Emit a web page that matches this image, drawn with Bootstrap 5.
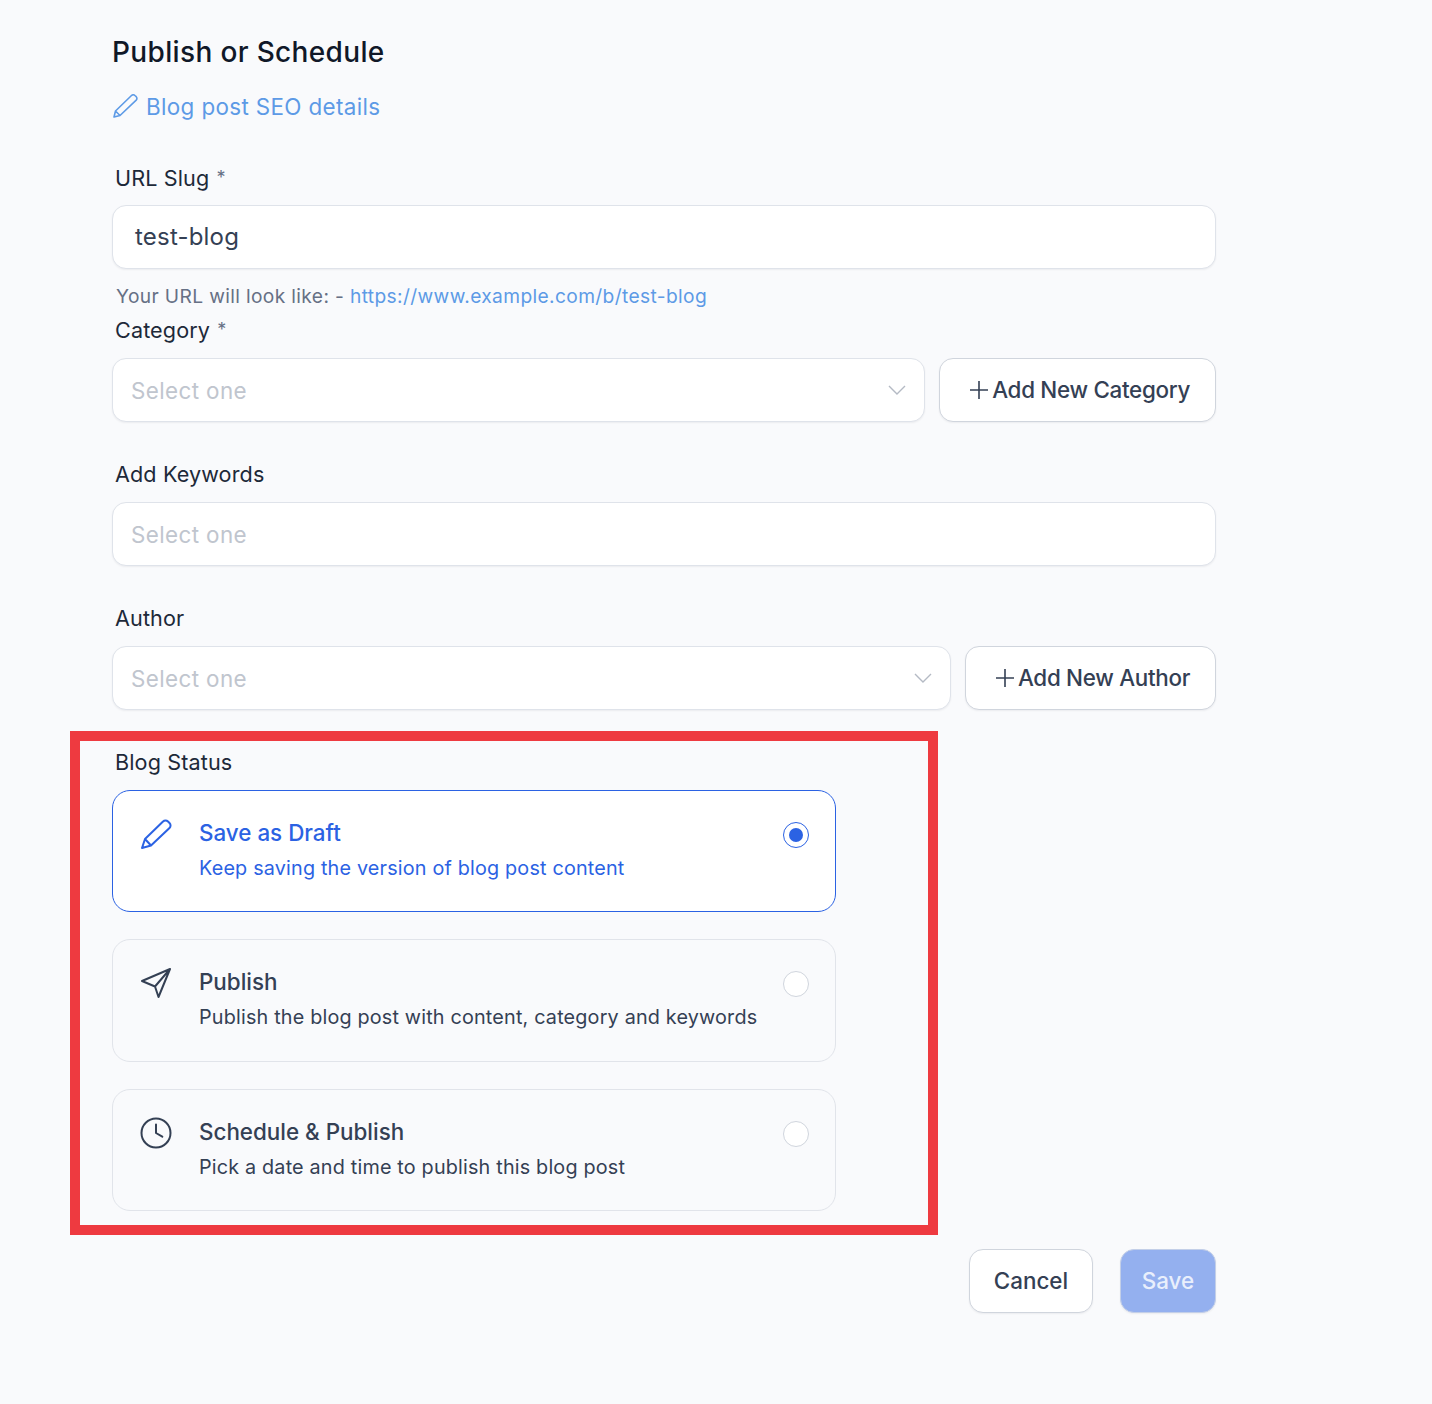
<!DOCTYPE html>
<html lang="en">
<head>
<meta charset="utf-8">
<title>Publish or Schedule</title>
<link href="https://cdn.jsdelivr.net/npm/bootstrap@5.3.0/dist/css/bootstrap.min.css" rel="stylesheet">
<style>
html,body{height:100%}
body{background:#f9fafc;font-family:Inter,"Liberation Sans",sans-serif;color:#344054;overflow:hidden}
.pg{width:1104px;margin-left:112px;padding-top:32px;position:relative}
.ttl{font-size:28px;line-height:40px;font-weight:500;color:#101828;margin:0;letter-spacing:.35px;height:40px}
.seo{display:flex;align-items:center;gap:8px;margin-top:20px;height:30px;color:#5d9ae6;text-decoration:none;font-size:22.4px;letter-spacing:.37px;width:max-content}
.lbl{display:block;font-size:21.6px;line-height:32px;color:#1d2939;margin:0 0 12px 3px;height:32px;letter-spacing:.12px}
.lbl span{color:#667085;font-size:18px;vertical-align:2px;margin-left:1px}
.lbl-first{margin-top:40px;margin-bottom:11px}
.fld{height:64px;background:#fff;border:1px solid #dfe3ea;border-radius:14px;box-shadow:0 1px 2px rgba(16,24,40,.06);display:flex;align-items:center;flex:1 1 auto;min-width:0;padding:0 18px;font-size:22.4px;color:#c0c5ce;letter-spacing:.4px}
.fld span{padding-top:2px}
.fld.val{color:#344054;font-size:24px;padding-left:22px;letter-spacing:.2px}
.fld svg{margin-left:auto}
.addb{height:64px;background:#fff;border:1px solid #d0d5dd;border-radius:14px;box-shadow:0 1px 2px rgba(16,24,40,.06);font-size:22.4px;color:#344054;padding:0 25px 0 29px;display:flex;align-items:center;gap:3px;flex:none;font-weight:500;letter-spacing:-.3px}
.hint{font-size:19.2px;line-height:28px;color:#667085;margin:13px 0 0 4px;height:28px;letter-spacing:.36px}
.hint a{color:#5d9ae6;text-decoration:none}
.gp{margin-bottom:36px}
.gp-cat{margin-top:4px}
.pair{gap:14px}
.stat{width:724px;height:122px;border:1px solid #e1e4ea;border-radius:18px;display:flex;padding:25px 26px 0 27px;margin-bottom:27px}
.stat.on{background:#fff;border-color:#2b62e3;color:#2b62e3}
.stat.mid{height:123px}
.stat.end{margin-bottom:0}
.stat svg{flex:none;margin:2px 27px 0 0}
.st1{font-size:22.4px;line-height:34px;font-weight:500}
.st2{font-size:19.8px;line-height:34px;margin-top:1px;letter-spacing:.18px}
.rad{width:26px;height:26px;border-radius:50%;border:1.5px solid #d0d5dd;background:#fff;margin-left:auto;margin-top:6px;flex:none;display:flex;align-items:center;justify-content:center}
.on .rad{border-color:#2b62e3}
.on .rad i{display:block;width:14px;height:14px;border-radius:50%;background:#2b62e3}
.frame{position:absolute;left:-42px;top:731px;width:868px;height:504px;border:10px solid #ee3a40;pointer-events:none}
.acts{display:flex;justify-content:flex-end;gap:27px;margin-top:38px}
.bt{height:64px;border-radius:14px;font-size:22.4px;font-weight:500;display:flex;align-items:center;justify-content:center;box-shadow:0 1px 2px rgba(16,24,40,.06)}
.bt.c{width:124px;background:#fff;border:1px solid #d0d5dd;color:#344054}
.bt.s{width:96px;background:#94b0ef;border:1px solid #c3cfe8;color:#e9effc}
</style>
</head>
<body>
<main class="pg">
  <h1 class="ttl">Publish or Schedule</h1>
  <a class="seo" href="#">
    <svg width="26" height="26" viewBox="0 0 26 26" fill="none" stroke="#5d9ae6" stroke-width="1.6" stroke-linejoin="round" stroke-linecap="round"><path d="M2 23l1.5-6L19.5 1.5a2.4 2.4 0 0 1 3.4 0l1.3 1.2a2.4 2.4 0 0 1 0 3.4L8 21.5 2 23zM3.5 17L8 21.5"/></svg>
    <span>Blog post SEO details</span>
  </a>
  <label class="lbl lbl-first">URL Slug <span>*</span></label>
  <div class="fld val">test-blog</div>
  <p class="hint">Your URL will look like: - <a href="#">https://www.example.com/b/test-blog</a></p>
  <div class="gp gp-cat">
    <label class="lbl">Category <span>*</span></label>
    <div class="d-flex pair">
      <div class="fld"><span>Select one</span><svg width="18" height="10" viewBox="0 0 18 10" fill="none" stroke="#b4bac4" stroke-width="1.4"><path d="M1 1l8 8 8-8"/></svg></div>
      <button class="addb" type="button"><svg width="20" height="20" viewBox="0 0 20 20" fill="none" stroke="#344054" stroke-width="1.6"><path d="M10 1v18M1 10h18"/></svg>Add New Category</button>
    </div>
  </div>
  <div class="gp">
    <label class="lbl">Add Keywords</label>
    <div class="fld"><span>Select one</span></div>
  </div>
  <div class="gp">
    <label class="lbl">Author</label>
    <div class="d-flex pair">
      <div class="fld"><span>Select one</span><svg width="18" height="10" viewBox="0 0 18 10" fill="none" stroke="#b4bac4" stroke-width="1.4"><path d="M1 1l8 8 8-8"/></svg></div>
      <button class="addb" type="button"><svg width="20" height="20" viewBox="0 0 20 20" fill="none" stroke="#344054" stroke-width="1.6"><path d="M10 1v18M1 10h18"/></svg>Add New Author</button>
    </div>
  </div>
  <label class="lbl">Blog Status</label>
  <div class="stat on">
    <svg width="32" height="32" viewBox="0 0 32 32" fill="none" stroke="#2b62e3" stroke-width="2" stroke-linejoin="round" stroke-linecap="round"><path d="M2 30l3-9L23 3.5a3.5 3.5 0 0 1 5 0l1.5 1.5a3.5 3.5 0 0 1 0 5L11 27.5 2 30zM5 21l6 6.5"/></svg>
    <div><div class="st1">Save as Draft</div><div class="st2">Keep saving the version of blog post content</div></div>
    <div class="rad"><i></i></div>
  </div>
  <div class="stat mid">
    <svg width="32" height="32" viewBox="0 0 32 32" fill="none" stroke="#344054" stroke-width="2" stroke-linejoin="round" stroke-linecap="round"><path d="M30 2L2 14l13 5.5L18.5 30 30 2zM15 19.5L30 2"/></svg>
    <div><div class="st1">Publish</div><div class="st2">Publish the blog post with content, category and keywords</div></div>
    <div class="rad"></div>
  </div>
  <div class="stat end">
    <svg width="32" height="32" viewBox="0 0 32 32" fill="none" stroke="#344054" stroke-width="2" stroke-linejoin="round" stroke-linecap="round"><circle cx="16" cy="16" r="14.5"/><path d="M16 7.5V16l6.3 3.7"/></svg>
    <div><div class="st1">Schedule &amp; Publish</div><div class="st2">Pick a date and time to publish this blog post</div></div>
    <div class="rad"></div>
  </div>
  <div class="frame"></div>
  <div class="acts">
    <button class="bt c" type="button">Cancel</button>
    <button class="bt s" type="button">Save</button>
  </div>
</main>
</body>
</html>
